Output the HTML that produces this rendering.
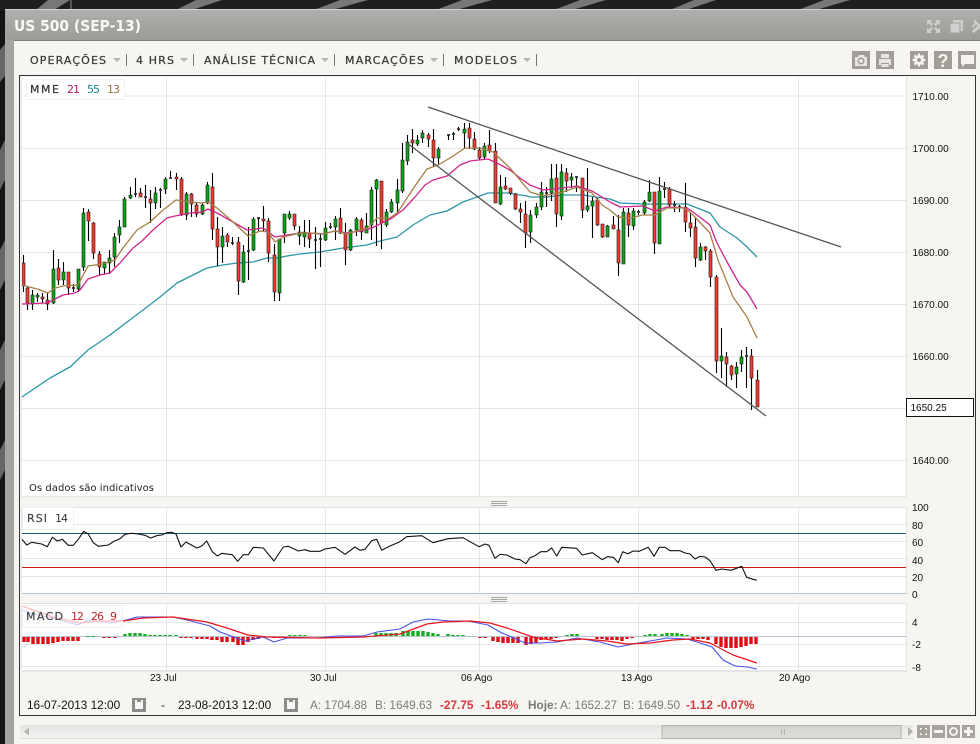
<!DOCTYPE html>
<html><head><meta charset="utf-8"><style>
html,body{margin:0;padding:0;background:#111;width:980px;height:744px;overflow:hidden}
svg{display:block}
text{font-family:"Liberation Sans",Arial,sans-serif}
.ax{font-size:10px;fill:#111}
.dv{font-family:"DejaVu Sans",sans-serif}
.tb{font-family:"DejaVu Sans",sans-serif;font-size:11px;fill:#3a3a3a;stroke:#3a3a3a;stroke-width:.25}
.st{font-size:11.8px}
.g1{fill:#7a7a7a}
.rd{fill:#d8383e;font-weight:bold}
.ma{fill:none;stroke-width:1.3;stroke-linejoin:round}
</style></head><body>
<svg width="980" height="744" viewBox="0 0 980 744" xmlns="http://www.w3.org/2000/svg">
<defs>
<linearGradient id="tbar" x1="0" y1="0" x2="0" y2="1"><stop offset="0" stop-color="#aeb0ad"/><stop offset="1" stop-color="#9a9c99"/></linearGradient>
<linearGradient id="trk" x1="0" y1="0" x2="0" y2="1"><stop offset="0" stop-color="#e4e4e2"/><stop offset="1" stop-color="#f3f3f1"/></linearGradient>
<linearGradient id="thm" x1="0" y1="0" x2="0" y2="1"><stop offset="0" stop-color="#d2d3ce"/><stop offset="1" stop-color="#dfe0dc"/></linearGradient>
<clipPath id="pl"><rect x="22" y="77" width="885" height="420"/></clipPath>
</defs>
<!-- background -->
<rect width="980" height="744" fill="#141414"/>
<rect x="0" y="0" width="980" height="10" fill="#1f1f1f"/>
<g fill="#777">
<path d="M48 0H70L54 10H36Z"/><path d="M196 0H222L192 10H176Z"/><path d="M340 0H368L332 10H314Z"/><path d="M462 0H492L456 10H436Z"/><path d="M580 0H606L572 10H554Z"/><path d="M694 0H716L686 10H670Z"/><path d="M824 0H850L816 10H798Z"/>
</g>
<rect x="70" y="0" width="2" height="10" fill="#555"/>
<g fill="#666"><path d="M0 50L5 44V76L0 82Z"/><path d="M0 150L5 140V180L0 190Z"/><path d="M0 250L5 240V280L0 290Z"/><path d="M0 350L5 340V380L0 390Z"/><path d="M0 450L5 440V470L0 480Z"/></g>
<!-- window -->
<rect x="5" y="9" width="975" height="735" fill="#a3a5a2"/>
<rect x="5" y="9" width="975" height="1" fill="#cfd1ce"/>
<rect x="6" y="10" width="974" height="30" fill="url(#tbar)"/>
<rect x="14" y="40" width="966" height="1" fill="#7d7f7c"/>
<rect x="14" y="41" width="966" height="703" fill="#f6f5f1"/>
<text x="14" y="31" font-size="15" font-weight="bold" class="dv" fill="#f8f9f7" textLength="127" lengthAdjust="spacingAndGlyphs">US 500 (SEP-13)</text>
<!-- window controls -->
<g fill="#cfd0cd">
<path d="M927 20h5l-1.600 1.600 2.600 2.600-1.800 1.800-2.600-2.600L927 25zM940 20v5l-1.600-1.600-2.600 2.600-1.800-1.800 2.600-2.600L935 20zM927 33v-5l1.600 1.600 2.600-2.600 1.800 1.800-2.600 2.600 1.600 1.600zM940 33h-5l1.600-1.600-2.600-2.600 1.800-1.800 2.600 2.600 1.600-1.600z"/>
<rect x="953" y="20" width="10" height="11"/><rect x="950" y="23" width="10" height="10" stroke="#a3a5a2" stroke-width="1"/>
<path d="M973 21l2-1 5 5v3l-4-4-3 4-1-2 3-3z"/><path d="M973 33l-1-2 8-7v4l-5 4z"/>
</g>
<!-- toolbar -->
<text x="30" y="64" class="tb" textLength="76">OPERAÇÕES</text>
<text x="136" y="64" class="tb" textLength="38">4 HRS</text>
<text x="204" y="64" class="tb" textLength="111">ANÁLISE TÉCNICA</text>
<text x="345" y="64" class="tb" textLength="79">MARCAÇÕES</text>
<text x="454" y="64" class="tb" textLength="63">MODELOS</text>
<g fill="#b5b4ae"><path d="M113 58h8l-4 4z"/><path d="M180 58h8l-4 4z"/><path d="M321 58h8l-4 4z"/><path d="M430 58h8l-4 4z"/><path d="M523 58h8l-4 4z"/></g>
<g fill="#777"><rect x="126" y="54" width="1" height="12"/><rect x="193" y="54" width="1" height="12"/><rect x="334" y="54" width="1" height="12"/><rect x="443" y="54" width="1" height="12"/><rect x="536" y="54" width="1" height="12"/></g>
<!-- toolbar icons -->
<g fill="#a09e96"><rect x="852" y="51" width="18" height="18"/><rect x="876" y="51" width="18" height="18"/><rect x="910" y="51" width="18" height="18"/><rect x="934" y="51" width="18" height="18"/><rect x="958" y="51" width="18" height="18"/></g>
<path d="M855 57h3l1-2h5l1 2h2v9h-12z" fill="#e8e7e3"/><circle cx="861" cy="61" r="3.500" fill="#a09e96"/><circle cx="861" cy="61" r="2" fill="#e8e7e3"/>
<path d="M881 54h8v4h-8z" fill="#e8e7e3"/><path d="M879 59h12v6h-2v-2h-8v2h-2z" fill="#e8e7e3"/><rect x="881.500" y="64" width="7" height="3" fill="#e8e7e3"/>
<circle cx="919" cy="60" r="5" fill="#f4f3ef"/><path d="M919 53.500v13M912.500 60h13M914.400 55.400l9.200 9.200M914.400 64.600l9.200-9.200" stroke="#f4f3ef" stroke-width="2.200"/><circle cx="919" cy="60" r="2" fill="#a09e96"/>
<text x="943" y="67" font-size="18" font-weight="bold" fill="#f4f3ef" text-anchor="middle">?</text>
<path d="M961 55h13v9h-9l-3 3v-3h-1z" fill="#f4f3ef"/>
<!-- chart frame -->
<rect x="19.500" y="75.500" width="956" height="640" fill="#f6f5f1" stroke="#333" stroke-width="1"/>
<!-- main plot -->
<rect x="22" y="77" width="885" height="419.500" fill="#fff"/>
<rect x="21" y="77" width="1" height="420" fill="#e6e6e6"/>
<rect x="906" y="77" width="1" height="420" fill="#e6e6e4"/>
<g fill="#e6e6e6">
<rect x="22" y="95.500" width="884" height="1"/><rect x="22" y="148" width="884" height="1"/><rect x="22" y="200" width="884" height="1"/><rect x="22" y="252" width="884" height="1"/><rect x="22" y="304" width="884" height="1"/><rect x="22" y="356" width="884" height="1"/><rect x="22" y="408" width="884" height="1"/><rect x="22" y="460" width="884" height="1"/><rect x="22" y="496" width="885" height="1"/>
<rect x="166" y="77" width="1" height="419"/><rect x="325" y="77" width="1" height="419"/><rect x="479" y="77" width="1" height="419"/><rect x="638" y="77" width="1" height="419"/><rect x="798" y="77" width="1" height="419"/>
</g>
<!-- legend -->
<rect x="26.500" y="79.500" width="98" height="20" fill="#fff" stroke="#f1f1f1"/>
<text x="30" y="93" class="dv" font-size="11" fill="#333" textLength="29" stroke="#333" stroke-width=".2">MME</text>
<text x="67" y="93" class="dv" font-size="11" fill="#b5176f" textLength="13">21</text>
<text x="87" y="93" class="dv" font-size="11" fill="#1f8296" textLength="13">55</text>
<text x="107" y="93" class="dv" font-size="11" fill="#96703f" textLength="13">13</text>
<g clip-path="url(#pl)">
<polyline class="ma" stroke="#2a96a8" points="22,397 50,378 70,367 88,350 110,335 143,310 160,297 177,283 193,275 207,268 223,265 237,263 253,262 267,258 277,258 287,256 300,254 320,252 343,248 367,245 380,241 397,237 413,225 430,215 447,211 463,202 477,197 488,193 507,193 527,196 530,197 547,197 563,195 583,195 610,199 620,203 643,204 663,204 687,204 710,213 720,227 737,238 747,247 757,257"/>
<path fill="none" stroke="#000" stroke-width="1.100" d="M23.500 255V292M27.500 286V310M32.500 290V310M37.500 293V302M42.500 293V303M47.500 293V310M53.500 250V304M58.500 259V285M63.500 262V285M68.500 272V295M73.500 284V292M78.500 269V292M83.500 208V271M88.500 209V241M93.500 222V259M99.500 251V275M104.500 262V274M109.500 250V274M114.500 233V267M119.500 220V243M124.500 197V227M130.500 187V199M135.500 178V197M140.500 188V197M145.500 185V208M150.500 190V223M155.500 187V209M160.500 188V208M165.500 177V194M170.500 171V179M176.500 173V190M181.500 177V216M186.500 192V220M191.500 193V217M196.500 203V217M202.500 203V215M207.500 182V204M212.500 173V240M217.500 217V266M222.500 227V263M227.500 233V247M232.500 237V245M238.500 237V295M243.500 245V283M248.500 227V280M253.500 217V251M258.500 217V232M263.500 206V232M268.500 218V262M274.500 244V301M279.500 239V301M284.500 214V243M289.500 211V220M294.500 214V230M299.500 226V245M304.500 220V247M309.500 220V248M315.500 227V269M320.500 233V267M325.500 222V241M330.500 223V229M335.500 216V240M340.500 208V234M345.500 223V265M350.500 229V251M356.500 217V236M361.500 218V240M366.500 213V233M371.500 187V240M376.500 179V246M381.500 181V249M386.500 209V227M391.500 199V213M397.500 179V212M402.500 143V193M407.500 135V165M412.500 129V153M417.500 135V146M422.500 130V143M428.500 133V147M433.500 129V167M438.500 147V165M448.500 134V140M453.500 132V140M458.500 127V131M464.500 123V149M469.500 123V149M474.500 132V150M479.500 147V160M484.500 143V160M489.500 130V153M495.500 143V203M500.500 175V205M505.500 177V190M510.500 188V195M515.500 193V210M520.500 203V223M525.500 201V248M530.500 210V243M536.500 203V218M541.500 182V210M546.500 187V207M551.500 164V201M556.500 164V227M561.500 164V220M566.500 168V192M571.500 173V188M576.500 176V192M582.500 178V218M587.500 168V212M592.500 197V238M597.500 198V226M602.500 224V238M607.500 225V237M613.500 216V229M618.500 215V276M623.500 208V264M628.500 208V237M633.500 208V230M638.500 210V215M644.500 200V215M649.500 180V202M654.500 192V254M659.500 177V244M664.500 182V198M669.500 187V207M674.500 201V212M679.500 205V212M685.500 183V232M690.500 213V237M695.500 218V267M700.500 243V261M705.500 246V260M710.500 249V287M716.500 275V373M721.500 328V378M726.500 352V387M731.500 365V380M736.500 362V388M741.500 350V372M746.500 347V388M751.500 349V410M757.500 370V407"/>
<path fill="#08a814" stroke="#111" stroke-width=".6" d="M31 295h3V304h-3zM36 295h3V297h-3zM52 269h3V303h-3zM62 272h3V280h-3zM77 269h3V289h-3zM82 213h3V267h-3zM103 262h3V268h-3zM108 258h3V263h-3zM113 237h3V257h-3zM118 227h3V235h-3zM123 199h3V227h-3zM129 195h3V198h-3zM154 193h3V203h-3zM164 179h3V189h-3zM185 194h3V215h-3zM201 205h3V214h-3zM206 185h3V203h-3zM221 236h3V247h-3zM242 252h3V282h-3zM252 219h3V250h-3zM278 239h3V293h-3zM283 214h3V233h-3zM288 214h3V218h-3zM298 232h3V236h-3zM303 232h3V237h-3zM324 228h3V240h-3zM334 219h3V227h-3zM349 230h3V250h-3zM355 219h3V230h-3zM365 226h3V233h-3zM370 190h3V225h-3zM375 180h3V189h-3zM385 212h3V225h-3zM390 202h3V212h-3zM396 190h3V203h-3zM401 160h3V191h-3zM406 142h3V161h-3zM416 140h3V144h-3zM421 133h3V138h-3zM437 149h3V158h-3zM463 129h3V133h-3zM483 146h3V157h-3zM499 187h3V204h-3zM529 215h3V232h-3zM535 207h3V215h-3zM540 192h3V207h-3zM550 179h3V193h-3zM560 172h3V216h-3zM570 177h3V180h-3zM586 206h3V210h-3zM591 201h3V206h-3zM606 226h3V237h-3zM622 212h3V264h-3zM632 211h3V226h-3zM643 202h3V213h-3zM648 192h3V201h-3zM658 191h3V244h-3zM699 247h3V260h-3zM720 356h3V361h-3zM735 367h3V374h-3zM740 357h3V364h-3z"/>
<path fill="#fa3c30" stroke="#111" stroke-width=".6" d="M22 263h3V286h-3zM26 288h3V303h-3zM41 297h3V299h-3zM46 300h3V304h-3zM57 268h3V280h-3zM67 272h3V288h-3zM87 212h3V221h-3zM92 223h3V253h-3zM98 254h3V267h-3zM139 193h3V197h-3zM149 199h3V203h-3zM175 177h3V179h-3zM180 179h3V215h-3zM190 194h3V204h-3zM195 205h3V214h-3zM211 187h3V229h-3zM216 229h3V247h-3zM226 235h3V242h-3zM237 242h3V281h-3zM262 219h3V221h-3zM267 221h3V253h-3zM273 255h3V292h-3zM293 214h3V226h-3zM308 233h3V239h-3zM339 218h3V233h-3zM344 233h3V250h-3zM360 220h3V232h-3zM380 181h3V223h-3zM411 140h3V143h-3zM427 135h3V139h-3zM432 140h3V158h-3zM468 128h3V138h-3zM473 139h3V149h-3zM478 150h3V158h-3zM488 145h3V151h-3zM494 151h3V203h-3zM504 186h3V189h-3zM509 188h3V193h-3zM514 194h3V209h-3zM519 209h3V212h-3zM524 214h3V233h-3zM555 178h3V214h-3zM565 173h3V181h-3zM581 178h3V210h-3zM596 200h3V225h-3zM601 224h3V237h-3zM612 225h3V229h-3zM617 230h3V263h-3zM627 213h3V225h-3zM653 192h3V243h-3zM668 189h3V205h-3zM684 207h3V222h-3zM689 223h3V228h-3zM694 227h3V258h-3zM704 247h3V251h-3zM709 251h3V277h-3zM715 277h3V361h-3zM725 357h3V364h-3zM730 366h3V375h-3zM750 356h3V378h-3zM756 380h3V407h-3z"/>
<path fill="none" stroke="#333" stroke-width="1.800" d="M72 288h3M134 194h3M144 197h3M159 190h3M169 178h3M231 243h3M247 251h3M257 218h3M314 240h3M319 239h3M329 227h3M447 135h3M452 134h3M457 129h3M545 193h3M575 177h3M637 212h3M663 189h3M673 205h3M678 207h3M745 356h3"/>
<polyline class="ma" stroke="#d0268c" points="22,304 47,303 53,300 63,295 75,293 80,290 88,279 100,275 110,273 120,263 133,248 142,241 153,230 167,218 175,216 190,213 202,212 208,209 217,213 233,222 247,230 263,228 275,237 287,235 300,233 310,233 323,234 335,231 347,233 360,231 372,228 382,223 392,218 403,210 415,197 425,185 433,180 447,176 460,165 470,161 488,159 497,163 510,170 520,178 530,185 543,190 563,188 577,186 592,191 602,197 610,202 620,207 643,206 655,211 667,207 687,208 693,212 710,225 717,243 726,260 740,285 747,292 757,309"/>
<polyline class="ma" stroke="#a57f45" points="22,285 37,289 48,293 55,288 63,286 78,285 88,266 102,264 115,260 123,248 137,230 150,222 163,210 176,200 190,202 202,203 208,202 217,208 233,222 248,236 260,231 268,232 275,242 283,237 300,233 310,233 323,234 335,231 347,234 360,230 368,228 377,218 390,218 398,212 407,198 417,183 427,169 438,165 450,158 465,148 480,148 493,152 510,168 520,180 530,192 543,196 563,192 577,187 592,193 602,205 610,210 618,217 630,218 643,215 655,215 667,208 685,208 693,215 710,233 718,260 733,297 747,317 757,338"/>
<line x1="428" y1="107" x2="841" y2="247" stroke="#555" stroke-width="1.300"/>
<line x1="407" y1="143" x2="766" y2="416" stroke="#555" stroke-width="1.300"/>
</g>
<text x="29" y="491" class="dv" font-size="10" fill="#222" textLength="125">Os dados são indicativos</text>
<!-- price axis -->
<text class="ax" x="912.500" y="100">1710.00</text><text class="ax" x="912.500" y="152">1700.00</text><text class="ax" x="912.500" y="204">1690.00</text><text class="ax" x="912.500" y="256">1680.00</text><text class="ax" x="912.500" y="308">1670.00</text><text class="ax" x="912.500" y="360">1660.00</text><text class="ax" x="912.500" y="464">1640.00</text>
<rect x="906.500" y="398.500" width="67" height="18" fill="#fff" stroke="#111"/>
<text class="ax" x="910.500" y="411">1650.25</text>
<!-- separators -->
<g fill="#a5a5a5"><rect x="491" y="501" width="16" height="1"/><rect x="491" y="503" width="16" height="1"/><rect x="491" y="505" width="16" height="1"/><rect x="491" y="597" width="16" height="1"/><rect x="491" y="599" width="16" height="1"/><rect x="491" y="601" width="16" height="1"/></g>
<!-- RSI panel -->
<rect x="22" y="508" width="885" height="85.500" fill="#fff"/>
<rect x="22" y="507" width="885" height="1" fill="#e2e2e2"/>
<rect x="21" y="508" width="1" height="86" fill="#e6e6e6"/>
<rect x="906" y="508" width="1" height="86" fill="#e6e6e4"/>
<g fill="#e6e6e6"><rect x="22" y="524" width="884" height="1"/><rect x="22" y="541" width="884" height="1"/><rect x="22" y="558" width="884" height="1"/><rect x="22" y="576" width="884" height="1"/>
<rect x="166" y="508" width="1" height="85"/><rect x="325" y="508" width="1" height="85"/><rect x="479" y="508" width="1" height="85"/><rect x="638" y="508" width="1" height="85"/><rect x="798" y="508" width="1" height="85"/></g>
<rect x="22" y="593" width="885" height="1" fill="#b9c2cf"/>
<rect x="22" y="533" width="884" height="1" fill="#1d5a70"/>
<rect x="22" y="567" width="884" height="1" fill="#cc1a1a"/>
<polyline fill="none" stroke="#111" stroke-width="1.100" stroke-linejoin="round" points="22,539.3 26.700,545 31.700,542.300 41.700,544 47.300,546.700 52.300,537.300 57.300,541 62.300,539.300 68.300,545.300 73.300,545.300 78.300,539.300 83.700,531.300 88.300,534 93.300,542.700 98.300,546.300 108.300,545 115,540.700 120,538.700 125,534.300 131.700,533.300 138.300,534 145,535.300 150.700,538 156.700,535.700 161.700,535 166.700,532.700 171.700,532.300 176,534 181,547 186,542 196.700,548 201.700,546 206.700,541 212.300,551.700 217.300,556 221.700,553.300 232.300,554.700 237.700,561.300 243.300,554.700 248.300,554.700 253.300,547.300 263.300,548 274,561 283.300,547 288.300,546.300 298.300,551 305,549.700 310,551.300 320,551.300 325,549 335,547.300 345,554.300 355,547 360,550.300 365,549.300 371.700,540.700 376.700,539.300 381.700,550.300 390,546 400,541.700 406.700,536.700 421.700,535.700 433,542.700 448,538.700 463,537.700 479,546.700 485,544 489,545.300 495,558.300 500,554.300 506.700,555 515,559 520,559.700 526,563.700 530,557.700 535,555.700 540.700,551.700 546.700,551.700 551.700,548 556.700,556 561.700,547.300 576.700,548.300 582.300,555 592.300,552.700 602.300,559.700 607.300,556.700 613.300,557.300 618.300,562.700 622.700,551.700 627.700,553.700 633.300,551 639.300,551.300 648.300,547.300 654,556.300 659.300,547.300 665,547.300 670,550.700 680,550.700 685,553 690,554 695,559 700,556.300 705,557 710,560.700 716,570.300 721.700,569 731,570.300 741.700,566.300 746.700,577.300 756.700,580.300"/>
<rect x="22.500" y="507.500" width="51" height="22" fill="#fff" stroke="#f1f1f1"/>
<text x="27" y="522" class="dv" font-size="11" fill="#444" textLength="20" stroke="#444" stroke-width=".2">RSI</text>
<text x="55" y="522" class="dv" font-size="11" fill="#333" textLength="13">14</text>
<text class="ax" x="912" y="511">100</text><text class="ax" x="912" y="529">80</text><text class="ax" x="912" y="546">60</text><text class="ax" x="912" y="564">40</text><text class="ax" x="912" y="581">20</text><text class="ax" x="912" y="598">0</text>
<!-- MACD panel -->
<rect x="22" y="604" width="885" height="66" fill="#fff"/>
<rect x="22" y="603" width="885" height="1" fill="#e2e2e2"/>
<rect x="21" y="604" width="1" height="66" fill="#e6e6e6"/>
<rect x="906" y="604" width="1" height="66" fill="#e6e6e4"/>
<g fill="#e6e6e6"><rect x="22" y="622" width="884" height="1"/><rect x="22" y="644" width="884" height="1"/><rect x="22" y="666" width="884" height="1"/><rect x="22" y="670" width="885" height="2"/>
<rect x="166" y="604" width="1" height="66"/><rect x="325" y="604" width="1" height="66"/><rect x="479" y="604" width="1" height="66"/><rect x="638" y="604" width="1" height="66"/><rect x="798" y="604" width="1" height="66"/></g>
<rect x="22" y="636" width="884" height="1" fill="#b6c2cf"/>
<path fill="none" stroke="#e00a12" stroke-width="3.400" d="M24 637v5M28 637v5M33 637v7M38 637v7M43 637v7M48 637v7M53 637v6M58 637v5M63 637v4M68 637v4M73 637v4M78 637v4M104 637v1M109 637v1M115 637v1M181 637v1M186 637v1M191 637v1M197 637v2M202 637v2M207 637v2M212 637v3M217 637v3M222 637v5M227 637v5M233 637v5M238 637v8M243 637v8M248 637v5M253 637v3M258 637v2M274 637v1M279 637v1M284 637v1M330 637v1M480 637v1M485 637v1M493 637v4M498 637v5M503 637v6M508 637v6M513 637v6M518 637v6M526 637v8M531 637v7M536 637v6M541 637v3M546 637v2M551 637v2M556 637v1M597 637v2M602 637v2M607 637v3M612 637v3M617 637v3M622 637v4M627 637v2M632 637v1M693 637v2M698 637v2M703 637v2M708 637v3M716 637v7M721 637v10M726 637v11M731 637v11M736 637v11M741 637v10M746 637v9M751 637v7M756 637v7"/>
<path fill="none" stroke="#10b020" stroke-width="3.400" d="M88 636v1M93 636v1M125 634v2M130 633v3M135 633v3M140 633v3M145 634v2M150 635v1M155 635v1M160 635v1M165 635v1M170 635v1M176 635v1M290 635v1M295 635v1M300 635v1M305 635v1M376 633v3M381 633v3M386 633v3M391 633v3M396 633v3M403 631v5M408 631v5M413 631v5M418 631v5M423 631v5M428 632v4M433 633v3M438 634v2M448 634v2M453 635v1M458 635v1M463 635v1M567 635v1M572 634v2M577 634v2M645 635v1M650 634v2M655 634v2M662 634v2M667 633v3M672 633v3M677 633v3M682 634v2M687 635v1"/>
<polyline fill="none" stroke="#4a4fe6" stroke-width="1.100" stroke-linejoin="round" points="22,610 33,614 53,618 78,625 88,620 110,623 123,621 137,617 150,617 173,617 187,620 210,626 220,632 245,641 263,637 274,642 287,638 317,638 337,636 363,636 377,632 400,629 413,622 428,619 450,621 468,621 488,625 500,632 525,643 540,643 557,642 577,638 600,642 618,647 633,644 650,641 667,638 687,639 697,642 712,647 723,660 735,666 747,667 757,669"/>
<polyline fill="none" stroke="#e8141c" stroke-width="1.200" stroke-linejoin="round" points="22,606 53,617 80,623 100,621 123,621 143,618 173,617 207,622 227,628 248,635 267,637 320,638 363,637 400,634 427,624 443,622 470,621 490,623 507,628 533,637 557,641 583,639 607,641 627,644 650,643 673,640 690,639 710,643 733,655 757,663"/>
<rect x="22.500" y="605.500" width="100" height="22" fill="#fff" fill-opacity=".72" stroke="#f1f1f1"/>
<text x="26" y="620" class="dv" font-size="11" fill="#444" textLength="37" stroke="#444" stroke-width=".2">MACD</text>
<text x="71" y="620" class="dv" font-size="11" fill="#c8242a" textLength="13">12</text>
<text x="91" y="620" class="dv" font-size="11" fill="#c8242a" textLength="13">26</text>
<text x="110" y="620" class="dv" font-size="11" fill="#c8242a">9</text>
<text class="ax" x="912" y="626">4</text><text class="ax" x="912" y="648">-2</text><text class="ax" x="912" y="671">-8</text>
<!-- dates -->
<text class="ax" x="150" y="681">23 Jul</text><text class="ax" x="310" y="681">30 Jul</text><text class="ax" x="461" y="681">06 Ago</text><text class="ax" x="621" y="681">13 Ago</text><text class="ax" x="779" y="681">20 Ago</text>
<!-- status bar -->
<text class="st" x="27" y="709" fill="#111">16-07-2013 12:00</text>
<rect x="132" y="698" width="14" height="14" fill="#8c8c8c"/><rect x="135" y="702" width="8" height="7" fill="#f6f5f1"/><rect x="135" y="700" width="2" height="2" fill="#f6f5f1"/><rect x="141" y="700" width="2" height="2" fill="#f6f5f1"/>
<text class="st" x="161" y="709" fill="#111">-</text>
<text class="st" x="178" y="709" fill="#111">23-08-2013 12:00</text>
<rect x="284" y="698" width="14" height="14" fill="#8c8c8c"/><rect x="287" y="702" width="8" height="7" fill="#f6f5f1"/><rect x="287" y="700" width="2" height="2" fill="#f6f5f1"/><rect x="293" y="700" width="2" height="2" fill="#f6f5f1"/>
<text class="st g1" x="310" y="709">A: 1704.88</text>
<text class="st g1" x="375" y="709">B: 1649.63</text>
<text class="st rd" x="440" y="709">-27.75</text>
<text class="st rd" x="481" y="709">-1.65%</text>
<text class="st g1" x="528" y="709" font-weight="bold">Hoje:</text>
<text class="st g1" x="560" y="709">A: 1652.27</text>
<text class="st g1" x="623" y="709">B: 1649.50</text>
<text class="st rd" x="686" y="709">-1.12</text>
<text class="st rd" x="717" y="709">-0.07%</text>
<!-- scrollbar -->
<rect x="20" y="725" width="893" height="13" fill="url(#trk)"/>
<rect x="20" y="738" width="893" height="1" fill="#dcdcda"/>
<path d="M24 731.500l5-4v8z" fill="#b4b4b0"/>
<rect x="662" y="725.500" width="239" height="13" fill="url(#thm)" stroke="#b3b4ae"/>
<path d="M781.500 729v6M784.500 729v6" stroke="#b5b5b0"/>
<path d="M908 727l5 4.500-5 4.500z" fill="#b0b0ac"/>
<g fill="#a6a49c"><rect x="917" y="725" width="13" height="13"/><rect x="932" y="725" width="13" height="13"/><rect x="947" y="725" width="13" height="13"/><rect x="962" y="725" width="13" height="13"/></g>
<path d="M920 728h2v1h-1v1h-1zM927 728v2h-1v-1h-1v-1zM920 735v-2h1v1h1v1zM927 735h-2v-1h1v-1h1z" fill="#f6f5f1"/>
<rect x="934" y="730" width="9" height="3" fill="#f6f5f1"/>
<circle cx="953.500" cy="731.500" r="3.500" fill="none" stroke="#f6f5f1" stroke-width="2"/>
<path d="M964 730h3v-3h3v3h3v3h-3v3h-3v-3h-3z" fill="#f6f5f1"/>
</svg>
</body></html>
